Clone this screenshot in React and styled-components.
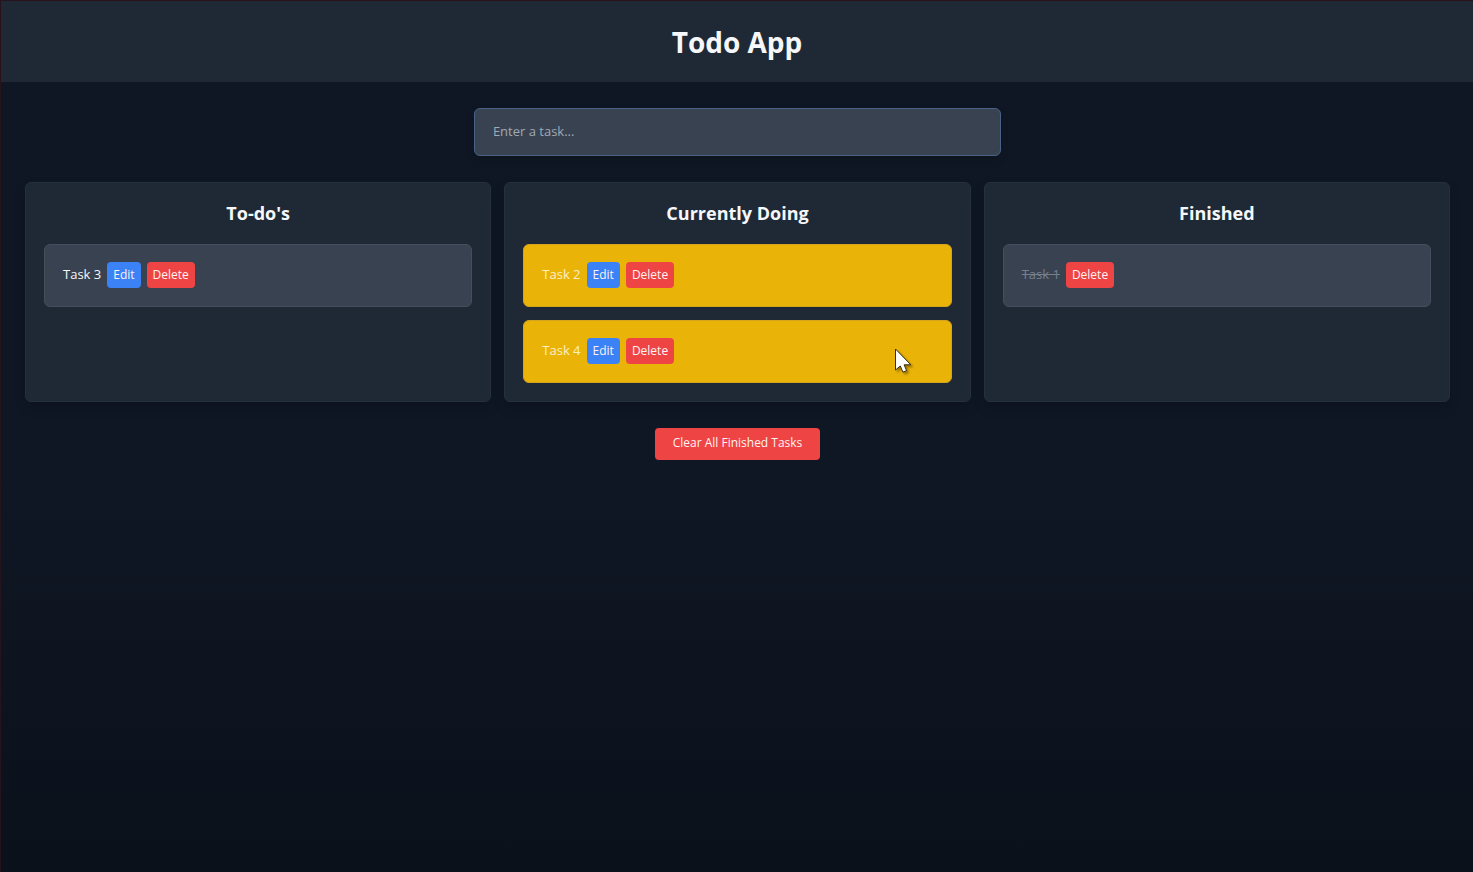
import React, { useState } from 'react';
import styled, { createGlobalStyle } from 'styled-components';

const GlobalStyle = createGlobalStyle`
  *, *::before, *::after { box-sizing: border-box; }
  body {
    margin: 0;
    background: #0b111b;
    color: #f5f7fa;
    font-family: 'Segoe UI', 'Open Sans', 'Noto Sans', sans-serif;
    font-size: 13px;
    line-height: 20px;
  }
`;

const Page = styled.div`
  min-height: 100vh;
  border-top: 1px solid #28121b;
  border-left: 1px solid #28121b;
  background: linear-gradient(#0f1724 0%, #0f1724 55%, #0b111b 100%);
`;

const Header = styled.header`
  padding: 21px 24px 20px;
  background: #1f2935;
  text-align: center;
`;

const AppTitle = styled.h1`
  margin: 0;
  font-size: 28px;
  line-height: 40px;
  font-weight: 700;
`;

const Main = styled.main`
  display: flex;
  flex-direction: column;
  align-items: center;
  gap: 26px;
  padding: 26px 23px 26px 24px;
`;

const TaskInput = styled.input`
  width: 37%;
  min-width: 280px;
  height: 48px;
  padding: 0 18px 2px;
  border: 1px solid #4a6285;
  border-radius: 6px;
  background: #394250;
  box-shadow: 0 4px 8px rgba(0, 0, 0, 0.15);
  color: #f5f7fa;
  font: inherit;
  outline: none;
  &::placeholder { color: #a0a9b6; opacity: 1; }
`;

const Board = styled.div`
  display: grid;
  grid-template-columns: repeat(3, 1fr);
  gap: 13px;
  width: 100%;
`;

const Column = styled.section`
  padding: 18px;
  border: 1px solid #25303d;
  border-radius: 6px;
  background: #1f2935;
  box-shadow: 0 6px 12px rgba(0, 0, 0, 0.15);
`;

const ColumnTitle = styled.h2`
  margin: 0 0 18px;
  font-size: 18px;
  line-height: 25px;
  font-weight: 700;
  text-align: center;
`;

const TaskList = styled.ul`
  display: flex;
  flex-direction: column;
  gap: 13px;
  margin: 0;
  padding: 0;
  list-style: none;
`;

const TaskCard = styled.li`
  display: flex;
  align-items: center;
  gap: 6px;
  height: 63px;
  padding: 0 18px 1px;
  border: 1px solid ${(p) => (p.$active ? '#d3a41c' : '#444e5c')};
  border-radius: 6px;
  background: ${(p) => (p.$active ? '#eab308' : '#394250')};
`;

const TaskName = styled.span`
  padding-bottom: 2px;
  color: ${(p) => (p.$state === 'finished' ? '#76808d' : p.$state === 'doing' ? '#fdf0c2' : '#f5f7fa')};
  text-decoration: ${(p) => (p.$state === 'finished' ? 'line-through' : 'none')};
`;

const Button = styled.button`
  padding: ${(p) => (p.$large ? '5px 18px 7px' : '3px 6px')};
  border: 0;
  border-radius: 4px;
  background: ${(p) => (p.$tone === 'edit' ? '#3b82f6' : '#ef4444')};
  color: #fdf3f3;
  font: inherit;
  font-size: 12px;
  cursor: pointer;
`;

const Pointer = styled.svg`
  position: fixed;
  left: 894px;
  top: 347px;
  pointer-events: none;
  filter: drop-shadow(2px 2px 1px rgba(0, 0, 0, 0.35));
`;

const columns = [
  { title: "To-do's", state: 'todo', tasks: ['Task 3'] },
  { title: 'Currently Doing', state: 'doing', tasks: ['Task 2', 'Task 4'] },
  { title: 'Finished', state: 'finished', tasks: ['Task 1'] },
];

export default function App() {
  const [draft, setDraft] = useState('');
  return (
    <Page>
      <GlobalStyle />
      <Header>
        <AppTitle>Todo App</AppTitle>
      </Header>
      <Main>
        <TaskInput
          type="text"
          aria-label="Task"
          placeholder="Enter a task..."
          value={draft}
          onChange={(e) => setDraft(e.target.value)}
        />
        <Board>
          {columns.map(({ title, state, tasks }) => (
            <Column key={state}>
              <ColumnTitle>{title}</ColumnTitle>
              <TaskList>
                {tasks.map((name) => (
                  <TaskCard key={name} $active={state === 'doing'}>
                    <TaskName $state={state}>{name}</TaskName>
                    {state !== 'finished' && <Button type="button" $tone="edit">Edit</Button>}
                    <Button type="button">Delete</Button>
                  </TaskCard>
                ))}
              </TaskList>
            </Column>
          ))}
        </Board>
        <Button type="button" $large>Clear All Finished Tasks</Button>
      </Main>
      <Pointer width="20" height="28" viewBox="0 0 20 28" aria-hidden="true">
        <path
          d="M1.5 2V23L6.3 19L8.9 25.2L12.6 23.6L10.1 17.8H16.8Z"
          fill="#fff"
          stroke="#3a2c10"
          strokeWidth="1"
          strokeLinejoin="round"
        />
      </Pointer>
    </Page>
  );
}
